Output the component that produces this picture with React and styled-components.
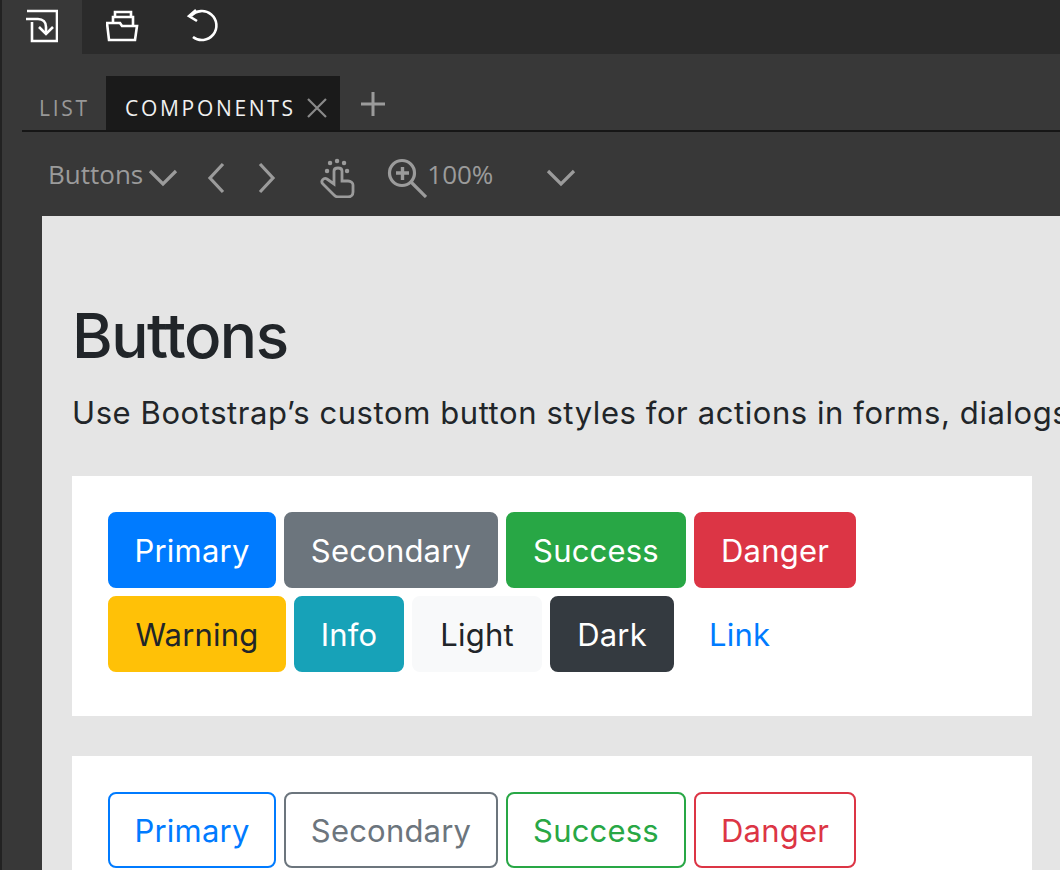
import React from "react"
import styled, { createGlobalStyle } from "styled-components"

const GlobalStyle = createGlobalStyle`
    html, body {
        margin: 0;
        padding: 0;
        height: 100%;
        background: #383838;
        overflow: hidden;
    }
`

const Page = styled.div`
    width: 1060px;
    height: 870px;
    overflow: hidden;
    display: flex;
    flex-direction: column;
    background: #383838;
    border-left: 2px solid #222;
    box-sizing: border-box;
    font-family: "Open Sans", "Noto Sans", sans-serif;
`

const TopBar = styled.div`
    height: 54px;
    flex: none;
    display: flex;
    background: #2b2b2b;
    margin-left: -2px;
`

const TopButton = styled.div`
    width: ${(p) => p.$w}px;
    display: flex;
    justify-content: center;
    padding-top: 9px;
    box-sizing: border-box;
    background: ${(p) => (p.$active ? "#383838" : "transparent")};
`

const TabBar = styled.div`
    height: 56px;
    margin: 22px 0 0 20px;
    flex: none;
    display: flex;
    align-items: stretch;
    border-bottom: 2px solid #161616;
    box-sizing: border-box;
`

const Tab = styled.div`
    display: flex;
    align-items: center;
    gap: 11px;
    padding: 10px 0 0 ${(p) => (p.$active ? 19 : 17)}px;
    width: ${(p) => p.$w}px;
    box-sizing: border-box;
    font-size: 21px;
    letter-spacing: 2.7px;
    color: ${(p) => (p.$active ? "#f0f0f0" : "#989898")};
    background: ${(p) => (p.$active ? "#1a1a1a" : "transparent")};
`

const TabClose = styled.svg`
    flex: none;
`

const AddTab = styled.div`
    display: flex;
    align-items: center;
    padding: 2px 0 0 20px;
`

const ToolBar = styled.div`
    height: 84px;
    flex: none;
    display: flex;
    align-items: center;
    padding: 4px 0 0 46px;
    box-sizing: border-box;
    color: #9b9b9b;
    font-size: 26px;
`

const ToolLabel = styled.span`
    margin-right: ${(p) => p.$mr || 0}px;
    position: relative;
    top: -2px;
`

const ToolIcon = styled.svg`
    flex: none;
    margin-right: ${(p) => p.$mr || 0}px;
    margin-top: ${(p) => p.$mt || 0}px;
    fill: none;
    stroke: #9b9b9b;
    stroke-width: ${(p) => p.$sw || 3.2};
`

const Canvas = styled.div`
    flex: 1;
    margin-left: 40px;
    background: #e5e5e5;
    padding: 79px 28px 0 30px;
    min-height: 0;
`

const Title = styled.h1`
    margin: 0;
    font-family: Inter, sans-serif;
    font-size: 62px;
    line-height: 82px;
    font-weight: 500;
    letter-spacing: -1.5px;
    color: #212529;
`

const Lead = styled.p`
    margin: 14px 0 41px;
    font-family: Inter, sans-serif;
    font-size: 31px;
    line-height: 44px;
    letter-spacing: 0.58px;
    color: #212529;
    white-space: nowrap;
`

const Card = styled.div`
    background: #fff;
    padding: 36px 36px 44px;
    margin-bottom: 40px;
    display: flex;
    flex-wrap: wrap;
    gap: 8px;
`

const Row = styled.div`
    display: flex;
    gap: 8px;
    width: 100%;
`

const Btn = styled.div`
    height: 76px;
    width: ${(p) => (p.$w ? `${p.$w}px` : "auto")};
    box-sizing: border-box;
    display: flex;
    align-items: center;
    justify-content: center;
    padding: 0 25px;
    border: 2px solid ${(p) => p.$border};
    border-radius: 8px;
    background: ${(p) => p.$bg};
    color: ${(p) => p.$color};
    font-family: Inter, sans-serif;
    font-size: 31px;
    letter-spacing: 0.2px;
    white-space: nowrap;
`

const solid = [
    [
        { label: "Primary", w: 168, bg: "#007bff", color: "#fff" },
        { label: "Secondary", w: 214, bg: "#6c757d", color: "#fff" },
        { label: "Success", w: 180, bg: "#28a745", color: "#fff" },
        { label: "Danger", w: 162, bg: "#dc3545", color: "#fff" },
    ],
    [
        { label: "Warning", w: 178, bg: "#ffc107", color: "#212529" },
        { label: "Info", w: 110, bg: "#17a2b8", color: "#fff" },
        { label: "Light", w: 130, bg: "#f8f9fa", color: "#212529" },
        { label: "Dark", w: 124, bg: "#343a40", color: "#fff" },
        { label: "Link", bg: "transparent", color: "#007bff" },
    ],
]

const outline = [
    { label: "Primary", w: 168, color: "#007bff" },
    { label: "Secondary", w: 214, color: "#6c757d" },
    { label: "Success", w: 180, color: "#28a745" },
    { label: "Danger", w: 162, color: "#dc3545" },
]

function App() {
    return (
        <Page>
            <GlobalStyle />
            <TopBar>
                <TopButton $w={82} $active>
                    <svg width="34" height="34" viewBox="0 0 34 34" fill="none" stroke="#fff" strokeWidth="2.6">
                        <path d="M3 2h30v30H8V13" />
                        <path d="M2 10h12c5 0 8 3 8 8v7" />
                        <path d="M15 18l7 7 7-7" />
                    </svg>
                </TopButton>
                <TopButton $w={82}>
                    <svg width="34" height="34" viewBox="0 0 34 34" fill="none" stroke="#fff" strokeWidth="2.6">
                        <path d="M7 14V8h20v9" />
                        <path d="M9 8V3h16v5" />
                        <path d="M1 14h13l2 3h15l-2 14H3z" />
                    </svg>
                </TopButton>
                <TopButton $w={78}>
                    <svg width="34" height="34" viewBox="0 0 34 34" fill="none" stroke="#fff" strokeWidth="2.6">
                        <path d="M5 7A14.5 14.5 0 1 1 7 28" />
                        <path d="M10 1L3 7l8 5" />
                    </svg>
                </TopButton>
            </TopBar>
            <TabBar>
                <Tab $w={84}>LIST</Tab>
                <Tab $w={234} $active>
                    COMPONENTS
                    <TabClose width="20" height="20" viewBox="0 0 20 20" stroke="#8a8a8a" strokeWidth="2.2">
                        <path d="M1 1l18 18M19 1L1 19" />
                    </TabClose>
                </Tab>
                <AddTab>
                    <svg width="26" height="26" viewBox="0 0 26 26" stroke="#9b9b9b" strokeWidth="3">
                        <path d="M13 1v24M1 13h24" />
                    </svg>
                </AddTab>
            </TabBar>
            <ToolBar>
                <ToolLabel $mr={5}>Buttons</ToolLabel>
                <ToolIcon width="30" height="18" viewBox="0 0 30 18" $mr={29} $mt={4}>
                    <path d="M2 2l13 13L28 2" />
                </ToolIcon>
                <ToolIcon width="18" height="32" viewBox="0 0 18 32" $mr={33} $mt={4}>
                    <path d="M16 2L3 16l13 14" />
                </ToolIcon>
                <ToolIcon width="18" height="32" viewBox="0 0 18 32" $mr={44} $mt={4}>
                    <path d="M2 2l13 14L2 30" />
                </ToolIcon>
                <ToolIcon width="36" height="44" viewBox="0 0 36 44" $mr={31} $sw={2.8}>
                    <path d="M14 41L3 30c-3-3 1-7 4-5l7 5V17c0-4 8-4 8 0v10h6c3 0 5 2 5 4v7c0 3-2 5-5 5H18c-2 0-3-1-4-2z" />
                    <path d="M10 9h.1M17 7h.1M24 9h.1M7 17h.1M27 17h.1" strokeWidth="4.4" strokeLinecap="round" />
                </ToolIcon>
                <ToolIcon width="40" height="44" viewBox="0 0 40 44">
                    <circle cx="15" cy="19" r="12.5" />
                    <path d="M24 28l15 15" />
                    <path d="M9 19h13M15.5 13v13" strokeWidth="3.4" />
                </ToolIcon>
                <ToolLabel $mr={53}>100%</ToolLabel>
                <ToolIcon width="30" height="18" viewBox="0 0 30 18" $mt={4}>
                    <path d="M2 2l13 13L28 2" />
                </ToolIcon>
            </ToolBar>
            <Canvas>
                <Title>Buttons</Title>
                <Lead>Use Bootstrap’s custom button styles for actions in forms, dialogs, and more with support for multiple sizes.</Lead>
                <Card>
                    {solid.map((row, i) => (
                        <Row key={i}>
                            {row.map((b) => (
                                <Btn key={b.label} $w={b.w} $bg={b.bg} $color={b.color} $border={b.bg}>{b.label}</Btn>
                            ))}
                        </Row>
                    ))}
                </Card>
                <Card>
                    <Row>
                        {outline.map((b) => (
                            <Btn key={b.label} $w={b.w} $bg="transparent" $color={b.color} $border={b.color}>{b.label}</Btn>
                        ))}
                    </Row>
                </Card>
            </Canvas>
        </Page>
    )
}

export default App
